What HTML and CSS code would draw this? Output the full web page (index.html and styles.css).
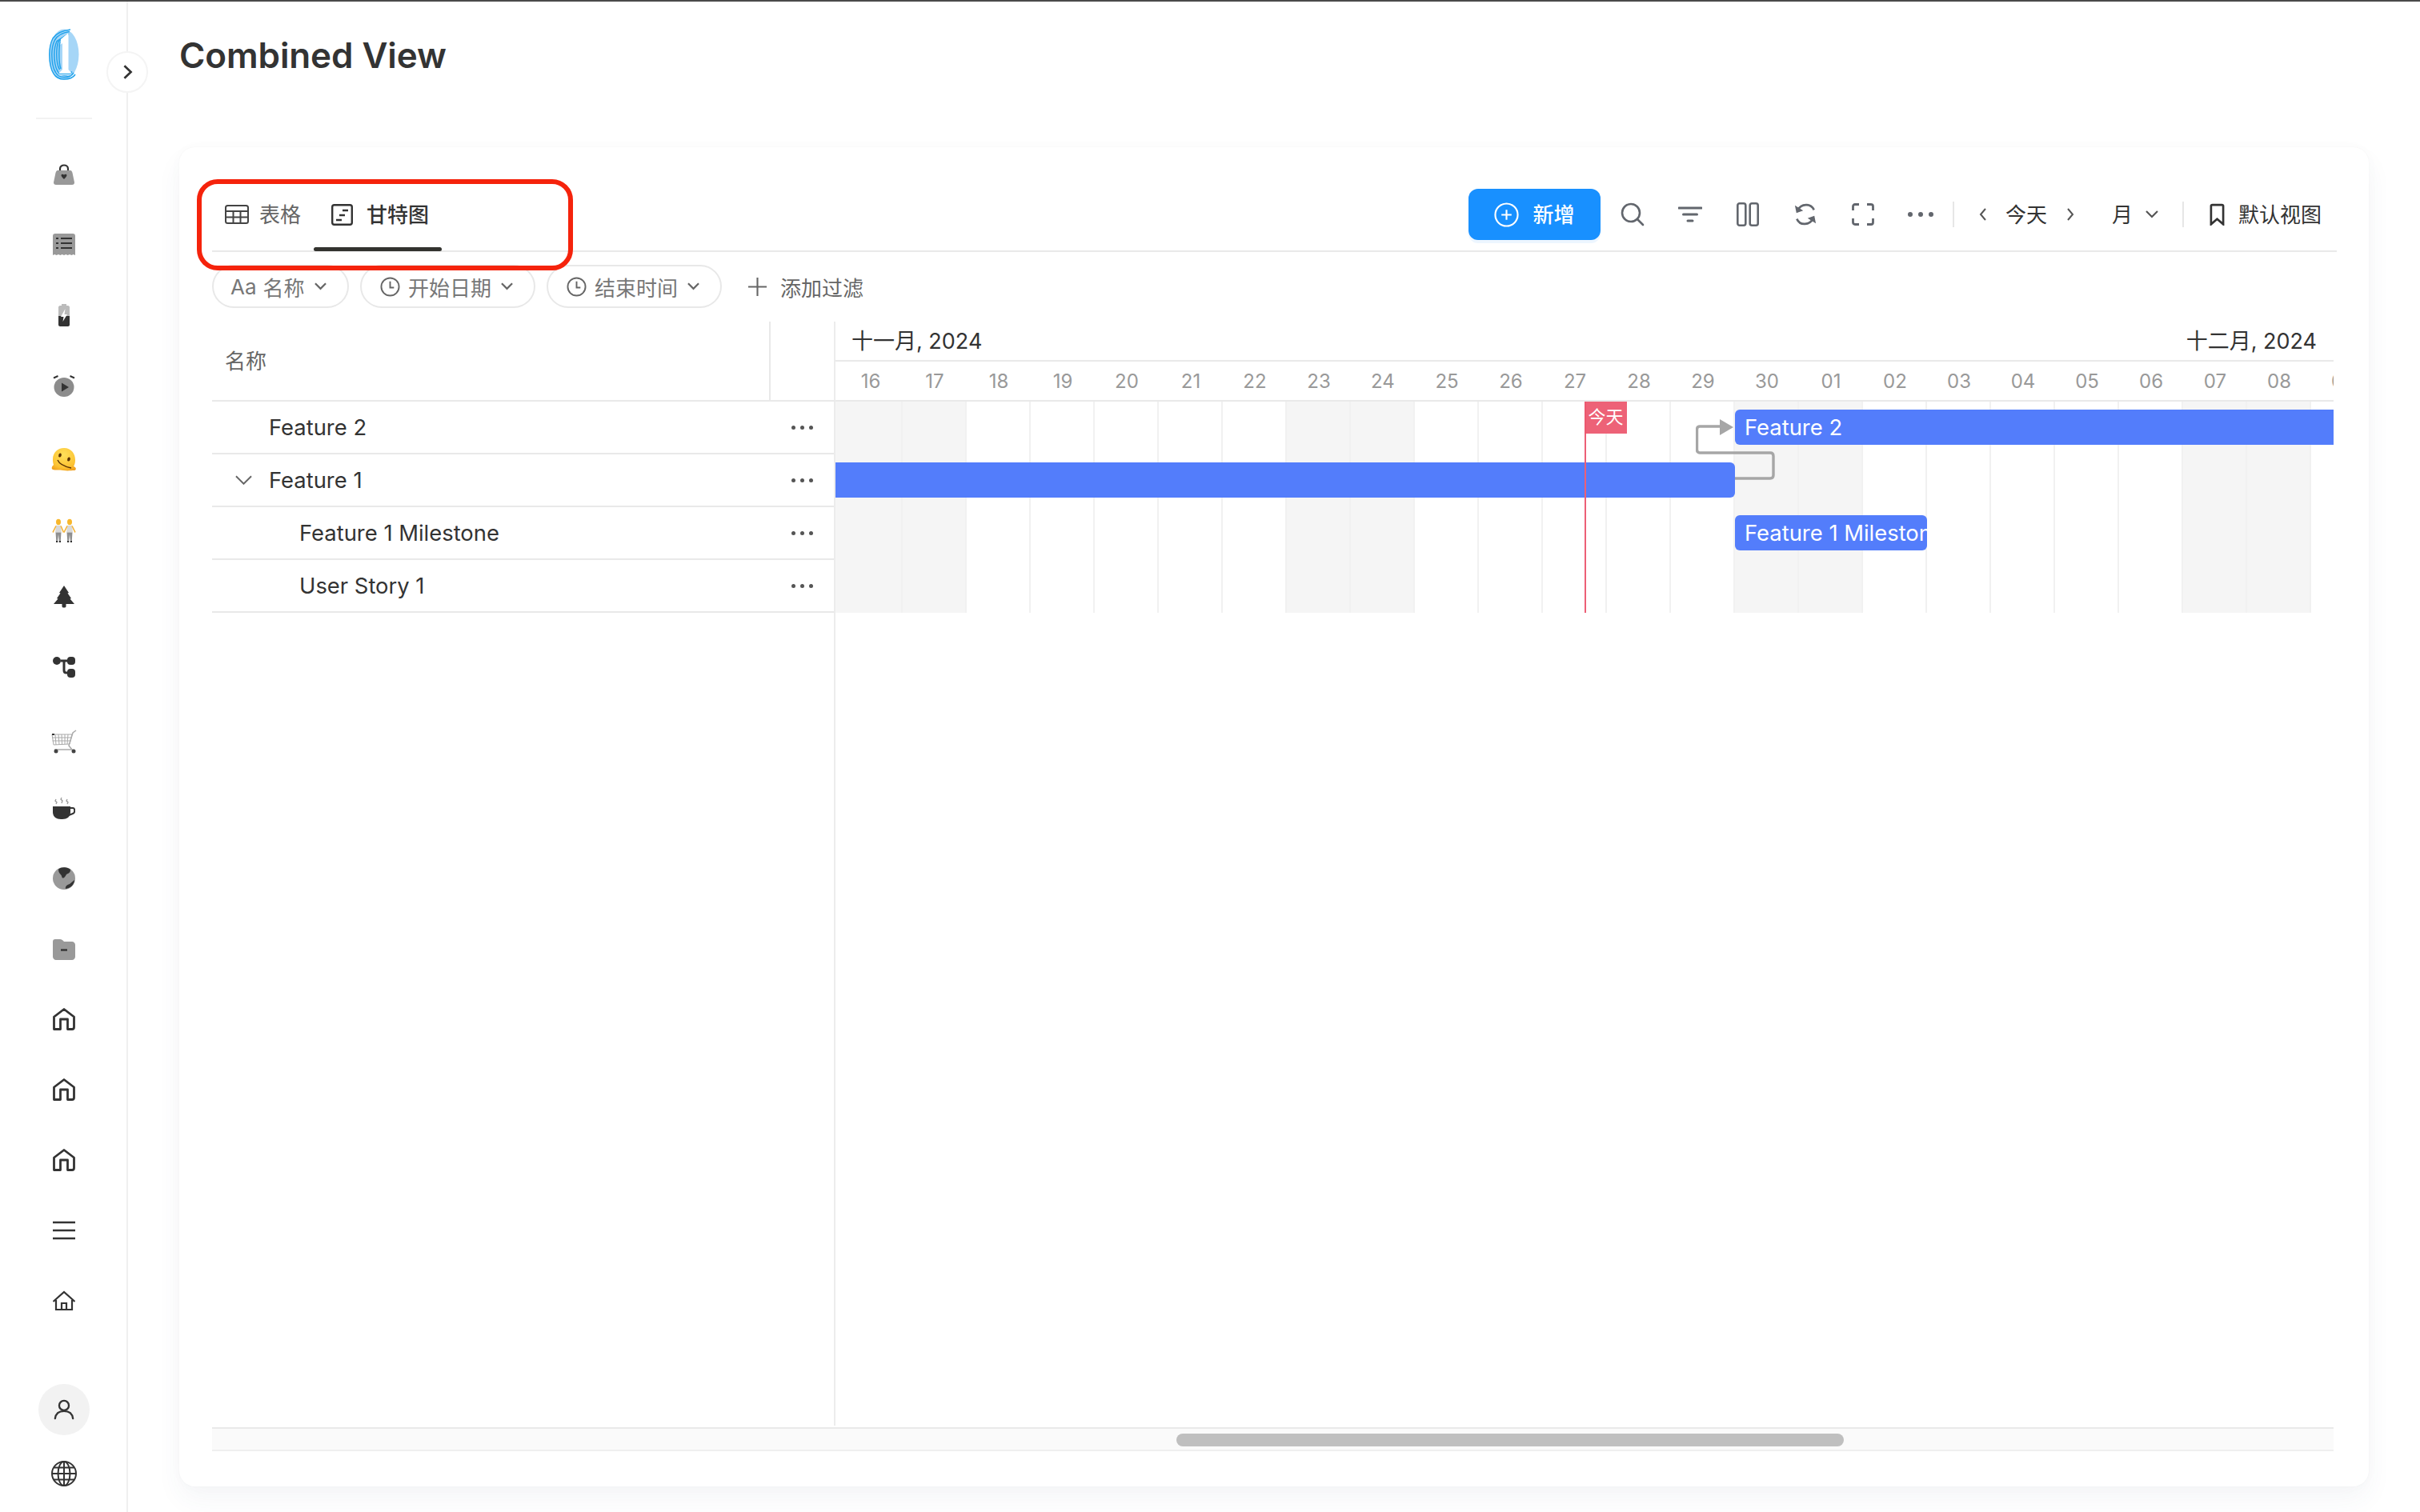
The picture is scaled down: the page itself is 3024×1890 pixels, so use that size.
FILE: index.html
```html
<!DOCTYPE html>
<html lang="zh">
<head>
<meta charset="utf-8">
<title>Combined View</title>
<link rel="stylesheet" href="styles.css">
</head>
<body>
<div class="page">
  <aside class="sidebar">
    <div class="logo">
      <svg viewBox="0 0 38 64" width="38" height="64">
        <ellipse cx="19" cy="32" rx="18.5" ry="31.5" fill="#a6d6f7"/>
        <g fill="none" stroke="#22a3ec" stroke-width="1.5">
          <path d="M27 1 C18 2 9 6 5 12 C1.500 19 .8 26 .8 32 C.8 42 2 50 6 56 C9 61 13 63 19 63 C25 63 30 62 33 57"/>
          <path d="M26 3.500 C19 4.500 11 8 7.500 14 C4.500 20 3.800 26 3.800 32 C3.800 42 5 49 8.500 54.500 C11 59 15 60.500 19 60.500 C24 60.500 28 59.500 31 55"/>
          <path d="M25 6 L10 15.500 C7.500 21 6.800 26 6.800 32 C6.800 41 8 48 11 53 C13 57 15 58 19 58 C24 58 26.500 57 29 53.500"/>
          <path d="M24 8 L12 16 C10 21 9.800 26 9.800 32 C9.800 41 11 47 13.500 51"/>
          <path d="M23.500 10 L14 17 C12.800 22 12.800 27 12.800 32 C12.800 40 13.500 46 15 50"/>
        </g>
        <path d="M24.500 5 L15 13 L14.500 20 L17 18 V51 L12 56 V58 H28 V55 L24.500 51 Z" fill="#fff"/>
        <path d="M12 56.500 H28" stroke="#22a3ec" stroke-width="1.2"/>
      </svg>
    </div>
    <div class="side-rule"></div>
    <button class="collapse" aria-label="展开">
      <svg viewBox="0 0 16 24" width="13" height="20"><path d="M3 2.500 L13 12 L3 21.500" fill="none" stroke="#333" stroke-width="3.300"/></svg>
    </button>
    <nav class="side-nav">
      <a class="side-item"><svg viewBox="0 0 28 28" width="28" height="28"><path d="M9 10 V7 C9 1 19 1 19 7 V10" fill="none" stroke="#333" stroke-width="2.2"/><path d="M6 9 H22 C23 9 24 10 24.500 12 L27 24 C27 26 26 27 24 27 H4 C2 27 1 26 1 24 L3.500 12 C4 10 5 9 6 9 Z" fill="#999"/><path d="M14 20 C8 15 11 12.500 14 14.500 C17 12.500 20 15 14 20 Z" fill="#333"/></svg></a>
      <a class="side-item"><svg viewBox="0 0 28 28" width="28" height="28"><path d="M3 0 H25 C27 0 28 1 28 3 V27 L25.700 26 L23.400 27 L21 26 L18.700 27 L16.300 26 L14 27 L11.700 26 L9.300 27 L7 26 L4.700 27 L2.300 26 L0 27 V3 C0 1 1 0 3 0 Z" fill="#999"/><g stroke="#333" stroke-width="2"><path d="M10 6 H24 M10 12 H24 M10 18 H24"/><path d="M4 6 H7 M4 12 H7 M4 18 H7"/></g></svg></a>
      <a class="side-item"><svg viewBox="0 0 28 28" width="28" height="28"><path d="M11 0 H17 V2 H19 C20 2 21 3 21 4 V15 H7 V4 C7 3 8 2 9 2 H11 Z" fill="#bbb"/><path d="M7 15 H21 V26 C21 27 20 28 19 28 H9 C8 28 7 27 7 26 Z" fill="#333"/><path d="M15.500 6 L10 16 H13.500 L12.500 22 L18 13 H14.500 Z" fill="#fff"/></svg></a>
      <a class="side-item"><svg viewBox="0 0 28 28" width="28" height="28"><ellipse cx="14" cy="16" rx="12.500" ry="12" fill="#8c8c8c"/><path d="M11 10.500 L20 16 L11 21.500 Z" fill="#333"/><path d="M1 4.500 L6.500 2 M27 4.500 L21.500 2" stroke="#333" stroke-width="2"/></svg></a>
      <a class="side-item low"><svg viewBox="0 0 32 30" width="32" height="30"><defs><radialGradient id="melt" cx=".5" cy=".3" r=".8"><stop offset="0" stop-color="#ffe05a"/><stop offset=".7" stop-color="#fcc232"/><stop offset="1" stop-color="#ef9a1a"/></radialGradient></defs><path d="M16 0 C25 0 30 7 30 15 C30 19 29 21 28 23 C31 24 32 27 29 28 C25 28 21 29 15 28 C10 27 5 28 2 27 C-1 25 2 22 3 21 C2 18 2 16 2 14 C2 6 8 0 16 0 Z" fill="url(#melt)"/><ellipse cx="11" cy="9" rx="1.800" ry="2.600" fill="#5b3305" transform="rotate(15 11 9)"/><ellipse cx="22" cy="14" rx="1.800" ry="2.600" fill="#5b3305" transform="rotate(15 22 14)"/><path d="M8 15 C10 20 16 23 25 25" fill="none" stroke="#5b3305" stroke-width="1.400"/></svg></a>
      <a class="side-item low"><svg viewBox="0 0 30 24" width="30" height="30" preserveAspectRatio="none"><g><circle cx="8" cy="3.500" r="3" fill="#f8b72c"/><path d="M5 7 H11 L12 14 H4 Z" fill="#d9d9d9"/><path d="M4.500 14 H11.500 L10.800 22 H8.800 L8 16 L7.200 22 H5.200 Z" fill="#8f8f8f"/><path d="M5 7.500 L1 14 M11 7.500 L14.500 14" stroke="#f3b33a" stroke-width="1.500"/><path d="M5 23 H7.200 M8.800 23 H11" stroke="#333" stroke-width="1.800"/></g><g transform="translate(14 0)"><circle cx="8" cy="3.500" r="3" fill="#f8b72c"/><path d="M5 7 H11 L12 14 H4 Z" fill="#d9d9d9"/><path d="M4.500 14 H11.500 L10.800 22 H8.800 L8 16 L7.200 22 H5.200 Z" fill="#8f8f8f"/><path d="M5 7.500 L1 14 M11 7.500 L15 14" stroke="#f3b33a" stroke-width="1.500"/><path d="M5 23 H7.200 M8.800 23 H11" stroke="#333" stroke-width="1.800"/></g></svg></a>
      <a class="side-item"><svg viewBox="0 0 28 28" width="28" height="28"><path d="M14 0 L20 9 L18.500 9.500 L23 16 L21.500 16.500 L27 23 H16.500 V26 C16.500 28 11.500 28 11.500 26 V23 H1 L6.500 16.500 L5 16 L9.500 9.500 L8 9 Z" fill="#333"/></svg></a>
      <a class="side-item"><svg viewBox="0 0 28 28" width="28" height="28"><path d="M10 6 H20 M14 6 V18 C14 20 15 21 17 21 H20" fill="none" stroke="#333" stroke-width="3"/><rect x="0" y="1" width="10" height="10" rx="5" fill="#333"/><rect x="18" y="1" width="10" height="10" rx="4" fill="#333"/><rect x="18" y="16" width="10" height="11" rx="4" fill="#333"/></svg></a>
      <a class="side-item low"><svg viewBox="0 0 32 30" width="32" height="30"><g stroke="#aaa" stroke-width="1" fill="none"><path d="M1 6 L26 6 L23 18 L3 19 Z"/><path d="M1 10 H25 M1.500 14 H24 M5 6 L6 19 M9 6 L10 19 M13 6 L13.500 18 M17 6 L17 18 M21 6 L20 18"/></g><path d="M31 1 L27 4 L22 20 L26 25 H4" fill="none" stroke="#aaa" stroke-width="1.500"/><circle cx="6" cy="27" r="2.500" fill="#444"/><circle cx="28" cy="27" r="2.500" fill="#444"/><path d="M1 6 H4" stroke="#333" stroke-width="2"/></svg></a>
      <a class="side-item"><svg viewBox="0 0 28 28" width="28" height="28"><path d="M0 12 H22 V19 C22 25 18 28 12 28 H10 C4 28 0 25 0 19 Z" fill="#333"/><path d="M22 14 H25 C28 14 28 20 25 21 L20 23" fill="none" stroke="#333" stroke-width="2"/><path d="M4 3 L3 5 L5 7 L4 9 M11 1 L10 3 L12 5 L11 8 M18 3 L17 5 L19 7 L18 9" fill="none" stroke="#999" stroke-width="1.300"/></svg></a>
      <a class="side-item"><svg viewBox="0 0 28 28" width="28" height="28"><circle cx="14" cy="14" r="14" fill="#999"/><path d="M7 2.500 C11 -.500 18 -.500 22 3 C22 8 18 8 17 9 C15 13 12 16 11 11 C10 8 7 8 7 2.500 Z M27 16 C27 22 22 26 16 27 C15 24 18 22 21 21 C23 19 25 18 27 16 Z" fill="#333"/></svg></a>
      <a class="side-item"><svg viewBox="0 0 28 28" width="28" height="28"><path d="M3 2 H9 C11 2 12 3 13 4 L14 5 H24 C26 5 28 7 28 9 V24 C28 26 26 28 24 28 H4 C2 28 0 26 0 24 V5 C0 3 1 2 3 2 Z" fill="#999"/><path d="M10 15.500 H18" stroke="#333" stroke-width="2.400"/></svg></a>
      <a class="side-item"><svg viewBox="0 0 28 28" width="28" height="28"><use href="#home-shape"/></svg></a>
      <a class="side-item"><svg viewBox="0 0 28 28" width="28" height="28"><use href="#home-shape"/></svg></a>
      <a class="side-item"><svg viewBox="0 0 28 28" width="28" height="28"><use href="#home-shape"/></svg></a>
      <a class="side-item"><svg viewBox="0 0 28 28" width="28" height="28"><path d="M0 4 H28 M0 14 H28 M0 24 H28" stroke="#333" stroke-width="2.600"/></svg></a>
      <a class="side-item"><svg viewBox="0 0 28 28" width="28" height="28"><path d="M0.500 15 L14 3 L27.500 15 M4 13 V25 H24 V13 M11 25 V17 H17 V25" fill="none" stroke="#333" stroke-width="2.200"/></svg></a>
    </nav>
    <div class="side-foot">
      <span class="avatar"><svg viewBox="0 0 28 28" width="26" height="26"><circle cx="14" cy="8.500" r="6.500" fill="none" stroke="#333" stroke-width="2.500"/><path d="M2 26 C3 18 8 16 14 16 C20 16 25 18 26 26" fill="none" stroke="#333" stroke-width="2.500" stroke-linecap="round"/></svg></span>
      <svg viewBox="0 0 32 32" width="32" height="32"><g fill="none" stroke="#333" stroke-width="2"><circle cx="16" cy="16" r="15"/><ellipse cx="16" cy="16" rx="7.500" ry="15"/><path d="M16 1 V31 M1 16 H31 M3.500 8.500 H28.500 M3.500 23.500 H28.500"/></g></svg>
    </div>
  </aside>

  <main class="main">
    <h1 class="title">Combined View</h1>
    <section class="card">
      <div class="top-bar">
        <div class="tabs">
          <div class="tab tab-table">
            <svg viewBox="0 0 30 24" width="30" height="24"><g fill="none" stroke="#444" stroke-width="2"><rect x="1" y="1" width="28" height="22" rx="2.500"/><path d="M1 8 H29 M1 15.500 H29 M10.500 8 V23 M19.500 8 V23"/></g></svg>
            <span class="cjk-up">表格</span>
          </div>
          <div class="tab tab-gantt">
            <svg viewBox="0 0 27 27" width="27" height="27"><g fill="none" stroke="#333" stroke-width="2.400"><rect x="1.200" y="1.200" width="24.600" height="24.600" rx="2.500"/><path d="M14 8 H21 M10 14 H17 M6 20 H13"/></g></svg>
            <span class="cjk-up">甘特图</span>
          </div>
        </div>
        <div class="tools">
          <button class="add-btn">
            <svg viewBox="0 0 32 32" width="31" height="31"><g fill="none" stroke="#fff" stroke-width="2.200"><circle cx="16" cy="16" r="14.500"/><path d="M16 9.500 V22.500 M9.500 16 H22.500"/></g></svg>
            <span class="cjk-up">新增</span>
          </button>
          <span class="tool"><svg viewBox="0 0 30 30" width="30" height="30"><g fill="none" stroke="#62666d" stroke-width="2.600"><circle cx="13" cy="13" r="11"/><path d="M21 21 L28 28" stroke-linecap="round"/></g></svg></span>
          <span class="tool"><svg viewBox="0 0 30 20" width="30" height="20"><path d="M1 2 H29 M6.500 10 H23.500 M12 18 H18" stroke="#62666d" stroke-width="3" stroke-linecap="round"/></svg></span>
          <span class="tool"><svg viewBox="0 0 28 30" width="28" height="30"><g fill="none" stroke="#62666d" stroke-width="2.600"><rect x="1.300" y="1.300" width="10" height="27.400" rx="2.500"/><rect x="16.700" y="1.300" width="10" height="27.400" rx="2.500"/></g></svg></span>
          <span class="tool"><svg viewBox="0 0 30 30" width="28" height="28"><g fill="none" stroke="#62666d" stroke-width="2.800"><path d="M5 9 C9 1 22 -1 26.500 9 M25 21 C21 29 8 31 3.500 21"/></g><path d="M1 3 L3 13 L12 10 Z M29 27 L27 17 L18 20 Z" fill="#62666d"/></svg></span>
          <span class="tool"><svg viewBox="0 0 28 28" width="28" height="28"><path d="M9 1.500 H4 C2.500 1.500 1.500 2.500 1.500 4 V9 M19 1.500 H24 C25.500 1.500 26.500 2.500 26.500 4 V9 M9 26.500 H4 C2.500 26.500 1.500 25.500 1.500 24 V19 M19 26.500 H24 C25.500 26.500 26.500 25.500 26.500 24 V19" fill="none" stroke="#62666d" stroke-width="2.800"/></svg></span>
          <span class="tool"><span class="dots dots-dark"><i></i><i></i><i></i></span></span>
          <span class="divider"></span>
          <svg class="nav-prev" viewBox="0 0 10 16" width="10" height="16"><path d="M8 1 L2 8 L8 15" fill="none" stroke="#555" stroke-width="2"/></svg>
          <span class="today cjk-up">今天</span>
          <svg class="nav-next" viewBox="0 0 10 16" width="10" height="16"><path d="M2 1 L8 8 L2 15" fill="none" stroke="#555" stroke-width="2"/></svg>
          <span class="month-pick cjk-up">月</span>
          <svg class="chev-sm month-chev" viewBox="0 0 16 10" width="16" height="10"><path d="M1 1 L8 8 L15 1" fill="none" stroke="#555" stroke-width="2.200"/></svg>
          <span class="divider divider-two"></span>
          <svg class="bookmark" viewBox="0 0 20 28" width="19" height="28"><path d="M2 27 V3 C2 2 3 1.500 4 1.500 H16 C17 1.500 18 2 18 3 V27 L10 20 Z" fill="none" stroke="#333" stroke-width="2.800"/></svg>
          <span class="view-name cjk-up">默认视图</span>
        </div>
      </div>

      <div class="filters">
        <div class="chip chip-name">
          <span class="chip-aa">Aa</span><span>名称</span>
          <svg class="chev-sm" viewBox="0 0 16 10" width="15" height="10"><path d="M1 1 L8 8 L15 1" fill="none" stroke="#666" stroke-width="2.400"/></svg>
        </div>
        <div class="chip chip-time">
          <svg viewBox="0 0 26 26" width="25" height="25"><g fill="none" stroke="#666" stroke-width="2"><circle cx="13" cy="13" r="11.500"/><path d="M13 6 V14 H18"/></g></svg>
          <span>开始日期</span>
          <svg class="chev-sm" viewBox="0 0 16 10" width="15" height="10"><path d="M1 1 L8 8 L15 1" fill="none" stroke="#666" stroke-width="2.400"/></svg>
        </div>
        <div class="chip chip-time">
          <svg viewBox="0 0 26 26" width="25" height="25"><g fill="none" stroke="#666" stroke-width="2"><circle cx="13" cy="13" r="11.500"/><path d="M13 6 V14 H18"/></g></svg>
          <span>结束时间</span>
          <svg class="chev-sm" viewBox="0 0 16 10" width="15" height="10"><path d="M1 1 L8 8 L15 1" fill="none" stroke="#666" stroke-width="2.400"/></svg>
        </div>
        <div class="add-filter">
          <svg viewBox="0 0 24 24" width="23" height="23"><path d="M12 0 V24 M0 12 H24" stroke="#666" stroke-width="2.200"/></svg>
          <span>添加过滤</span>
        </div>
      </div>

      <div class="gantt">
        <div class="tree">
          <div class="tree-head"><span class="tree-title cjk-up">名称</span><span class="tree-extra"></span></div>
          <div class="tree-row"><span class="row-name lvl-1">Feature 2</span><span class="dots"><i></i><i></i><i></i></span></div>
          <div class="tree-row">
            <svg class="row-chev" viewBox="0 0 22 12" width="21" height="12"><path d="M1 1 L11 11 L21 1" fill="none" stroke="#666" stroke-width="2"/></svg>
            <span class="row-name lvl-1b">Feature 1</span><span class="dots"><i></i><i></i><i></i></span>
          </div>
          <div class="tree-row"><span class="row-name lvl-2">Feature 1 Milestone</span><span class="dots"><i></i><i></i><i></i></span></div>
          <div class="tree-row"><span class="row-name lvl-2">User Story 1</span><span class="dots"><i></i><i></i><i></i></span></div>
        </div>
        <div class="timeline">
          <div class="months"><span class="cjk-up">十一月, 2024</span><span class="cjk-up">十二月, 2024</span></div>
          <div class="days">
            <span class="day day-first">16</span><span class="day">17</span><span class="day">18</span><span class="day">19</span><span class="day">20</span><span class="day">21</span><span class="day">22</span><span class="day">23</span><span class="day">24</span><span class="day">25</span><span class="day">26</span><span class="day">27</span><span class="day">28</span><span class="day">29</span><span class="day">30</span><span class="day">01</span><span class="day">02</span><span class="day">03</span><span class="day">04</span><span class="day">05</span><span class="day">06</span><span class="day">07</span><span class="day">08</span><span class="day">09</span>
          </div>
          <div class="chart">
            <div class="grid">
              <i class="col col-first off"></i><i class="col off"></i><i class="col"></i><i class="col"></i><i class="col"></i><i class="col"></i><i class="col"></i><i class="col off"></i><i class="col off"></i><i class="col"></i><i class="col"></i><i class="col"></i><i class="col"></i><i class="col"></i><i class="col off"></i><i class="col off"></i><i class="col"></i><i class="col"></i><i class="col"></i><i class="col"></i><i class="col"></i><i class="col off"></i><i class="col off"></i>
            </div>
            <svg class="link" viewBox="0 0 110 90" width="110" height="90"><path d="M49 77 H93 Q97 77 97 73 V49 Q97 45 93 45 H5 Q1.500 45 1.500 41 V16 Q1.500 12 5 12 H32" fill="none" stroke="#a6a6a6" stroke-width="3.400"/><path d="M30 3 L47 13 L30 23 Z" fill="#a6a6a6"/></svg>
            <div class="bar bar-f2">Feature 2</div>
            <div class="bar bar-f1"></div>
            <div class="bar bar-ms">Feature 1 Milestone</div>
            <div class="today-line"></div>
            <div class="today-tag">今天</div>
          </div>
        </div>
      </div>

      <div class="hscroll"><div class="thumb"></div></div>

      <div class="annotation"></div>
    </section>
  </main>
</div>
<svg class="defs" width="0" height="0"><defs>
  <g id="home-shape"><path d="M1.500 26.500 V11 L14 1.500 L26.500 11 V24 C26.500 25.500 25.500 26.500 24 26.500 H18.500 V14 H9.500 V26.500 Z" fill="none" stroke="#333" stroke-width="2.800" stroke-linejoin="round"/></g>
</defs></svg>
</body>
</html>
```

FILE: styles.css
```css
* { box-sizing: border-box; }
html, body { margin: 0; padding: 0; background: #fff; }
body {
  font-family: Inter, "Noto Sans CJK SC", sans-serif;
  color: #333;
  width: 3024px;
  height: 1890px;
  overflow: hidden;
}
.page { display: flex; height: 1890px; border-top: 2px solid #4a4a4a; }
.defs { position: absolute; }
.cjk-up { padding-bottom: 3px; }

/* sidebar */
.sidebar {
  position: relative;
  width: 160px;
  flex: none;
  display: flex;
  flex-direction: column;
  align-items: center;
  border-right: 2px solid #f0f0f0;
  padding: 34px 0 32px 2px;
}
.logo { height: 64px; }
.logo svg { display: block; }
.side-rule { width: 70px; height: 2px; background: #f2f2f2; margin-top: 47px; }
.collapse {
  position: absolute;
  left: 133px;
  top: 62px;
  width: 52px;
  height: 52px;
  border-radius: 50%;
  background: #fff;
  border: 2px solid #f4f4f4;
  padding: 0;
  display: flex;
  align-items: center;
  justify-content: center;
  z-index: 2;
}
.side-nav { display: flex; flex-direction: column; margin-top: 25px; }
.side-item { height: 88px; display: flex; align-items: center; justify-content: center; }
.side-item.low { padding-top: 10px; }
.side-foot { margin-top: auto; display: flex; flex-direction: column; align-items: center; gap: 32px; }
.avatar {
  width: 64px; height: 64px; border-radius: 50%;
  background: #f2f2f2;
  display: flex; align-items: center; justify-content: center;
}
.side-foot svg { display: block; }

/* main */
.main { flex: 1; padding: 0 64px; min-width: 0; }
.title {
  margin: 0;
  height: 182px;
  padding-top: 37px;
  font-size: 44px;
  line-height: 60px;
  font-weight: 600;
  letter-spacing: -0.1px;
  color: #333;
}
.card {
  position: relative;
  width: 2736px;
  height: 1674px;
  background: #fff;
  border-radius: 20px;
  padding: 39px 44px 0 41px;
  box-shadow: 0 0 3px rgba(0, 0, 0, .03), 0 16px 32px rgba(60, 70, 110, .05), 0 0 24px rgba(0, 0, 0, .015);
}

/* top bar */
.top-bar {
  display: flex;
  height: 92px;
  margin-right: -4px;
  border-bottom: 2px solid #e9e9e9;
  justify-content: space-between;
  align-items: stretch;
}
.tabs { display: flex; }
.tab { display: flex; align-items: center; font-size: 26px; position: relative; height: 90px; }
.tab-table { padding: 0 16px; gap: 13px; color: #666; }
.tab-gantt { padding: 0 16px 0 22px; gap: 17px; color: #333; font-weight: 500; }
.tab-gantt::after {
  content: "";
  position: absolute;
  left: 0; right: 0; bottom: -1px;
  height: 5px;
  border-radius: 3px;
  background: #33332f;
}
.tools { display: flex; align-items: center; padding-right: 19px; }
.add-btn {
  width: 165px;
  height: 64px;
  background: #1890ff;
  border: 0;
  border-radius: 12px;
  color: #fff;
  font: 500 26px Inter, "Noto Sans CJK SC", sans-serif;
  display: flex;
  align-items: center;
  justify-content: center;
  gap: 17px;
  padding: 0;
  margin-right: 4px;
  box-shadow: 0 4px 0 rgba(24, 144, 255, .08);
}
.tool { width: 72px; display: flex; align-items: center; justify-content: center; }
.divider { width: 2px; height: 32px; background: #e6e6e6; margin: 0 31px 0 4px; }
.divider-two { margin: 0 32px 0 0; }
.today { font-size: 26px; margin: 0 24px 0 23px; color: #333; }
.month-pick { font-size: 26px; margin: 0 16px 0 47px; }
.month-chev { margin-right: 30px; }
.view-name { font-size: 26px; margin-left: 17px; }
.chev-sm { flex: none; }
.dots { display: inline-flex; gap: 6px; align-items: center; }
.dots i { width: 5px; height: 5px; border-radius: 50%; background: #555; display: block; }
.dots-dark { gap: 7px; }
.dots-dark i { width: 6px; height: 6px; background: #62666d; }

/* filters */
.filters { display: flex; align-items: center; gap: 14px; margin-top: 16px; height: 54px; }
.chip {
  height: 54px;
  border: 2px solid #e8e8e8;
  border-radius: 27px;
  display: flex;
  align-items: center;
  font-size: 26px;
  color: #777;
}
.chip-name { width: 171px; padding-left: 21px; }
.chip-aa { margin-right: 8px; }
.chip-name .chev-sm { margin-left: 12px; }
.chip-time { width: 219px; padding-left: 23px; gap: 10px; }
.chip-time .chev-sm { margin-left: 2px; }
.add-filter {
  display: flex;
  align-items: center;
  margin-left: 19px;
  gap: 17px;
  font-size: 26px;
  color: #666;
}

/* gantt */
.gantt { display: flex; height: 1380px; margin-top: 17px; }
.tree { width: 779px; flex: none; border-right: 2px solid #ececec; }
.tree-head {
  height: 100px;
  border-bottom: 2px solid #e9e9e9;
  display: flex;
  align-items: center;
  justify-content: space-between;
  margin-right: -1px;
}
.tree-title { font-size: 26px; color: #666; margin-left: 16px; }
.tree-extra { width: 82px; height: 98px; border-left: 2px solid #e9e9e9; }
.tree-row {
  height: 66px;
  border-bottom: 2px solid #e9e9e9;
  display: flex;
  align-items: center;
  font-size: 27.4px;
  color: #333;
}
.row-name { flex: 1; }
.lvl-1 { padding-left: 71px; }
.lvl-1b { padding-left: 21px; }
.lvl-2 { padding-left: 109px; }
.row-chev { margin-left: 29px; }
.tree-row .dots { margin-right: 26px; }

.timeline { flex: 1; min-width: 0; overflow: hidden; }
.months {
  height: 50px;
  border-bottom: 2px solid #e9e9e9;
  display: flex;
  justify-content: space-between;
  align-items: center;
  font-size: 27px;
  color: #333;
  padding: 0 21px 0 20px;
}
.days {
  height: 50px;
  border-bottom: 2px solid #e9e9e9;
  display: flex;
  align-items: center;
  font-size: 24px;
  color: #999;
}
.day { width: 80px; flex: none; text-align: center; }
.day-first { width: 84px; padding-left: 4px; }
.chart { position: relative; height: 264px; }
.grid { display: flex; height: 264px; }
.col { width: 80px; flex: none; border-right: 2px solid #f1f1f1; display: block; }
.col-first { width: 84px; }
.off { background: #f5f5f5; }
.bar {
  position: absolute;
  height: 44px;
  background: #537dfb;
  color: #fff;
  font-size: 27.4px;
  line-height: 44px;
  padding-left: 12px;
  white-space: nowrap;
  overflow: hidden;
  border-radius: 6px;
}
.bar-f2 { left: 1124px; top: 10px; width: 748px; border-radius: 6px 0 0 6px; }
.bar-f1 { left: 0; top: 76px; width: 1124px; border-radius: 0 6px 6px 0; }
.bar-ms { left: 1124px; top: 142px; width: 240px; }
.link { position: absolute; left: 1075px; top: 19px; }
.today-line { position: absolute; left: 936px; top: 0; width: 2px; height: 264px; background: #ec5f76; }
.today-tag {
  position: absolute;
  left: 936px; top: 0;
  width: 53px; height: 40px;
  background: rgba(236, 88, 110, .94);
  color: #fff;
  font-size: 22px;
  line-height: 38px;
  text-align: center;
}

/* horizontal scrollbar */
.hscroll {
  height: 30px;
  margin-top: 2px;
  background: #fafafa;
  border-top: 2px solid #e9e9e9;
  border-bottom: 2px solid #efefef;
  padding-top: 6px;
  padding-left: 1205px;
}
.thumb { width: 834px; height: 16px; border-radius: 8px; background: #bfbfbf; }

/* annotation */
.annotation {
  position: absolute;
  left: 22px;
  top: 40px;
  width: 470px;
  height: 114px;
  border: 6px solid #f5230c;
  border-radius: 26px;
  pointer-events: none;
}
```
